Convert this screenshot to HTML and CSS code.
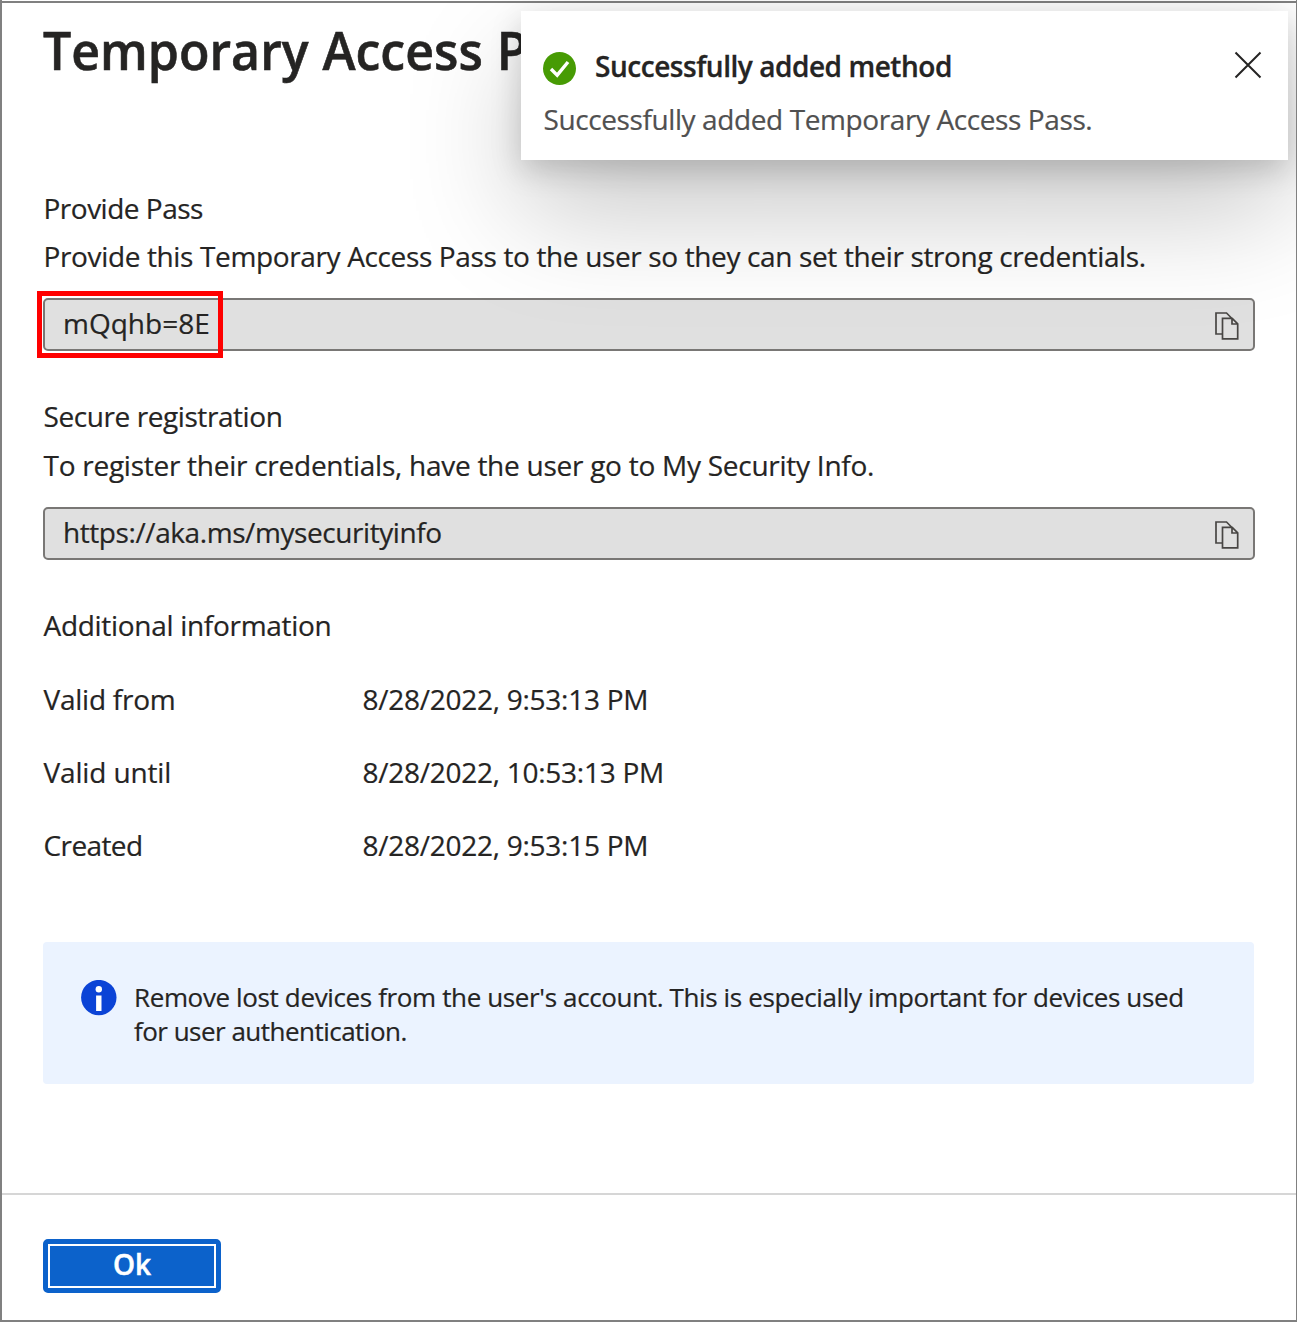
FILE: index.html
```html
<!DOCTYPE html>
<html lang="en">
<head>
<meta charset="utf-8">
<title>Temporary Access Pass</title>
<link rel="stylesheet" href="styles.css">
</head>
<body>
<div class="panel">
  <main class="content">
    <h1 class="title">Temporary Access Pass</h1>
    <section class="section">
      <h2 class="heading"><span class="t-provide">Provide Pass</span></h2>
      <p class="description"><span class="t-provide-desc">Provide this Temporary Access Pass to the user so they can set their strong credentials.</span></p>
      <div class="field">
        <span class="value t-pass">mQqhb=8E</span>
        <svg class="copy" viewBox="0 0 24 28" width="24" height="28"><path d="M7 22H1V1h10.500l5 5M7.500 6.300h9.700l5.500 5.500v15H7.500zM17 6.300v5.700h5.700"/></svg>
        <span class="marker"></span>
      </div>
    </section>
    <section class="section">
      <h2 class="heading"><span class="t-secure">Secure registration</span></h2>
      <p class="description description-secure"><span class="t-secure-desc">To register their credentials, have the user go to My Security Info.</span></p>
      <div class="field">
        <span class="value t-url">https://aka.ms/mysecurityinfo</span>
        <svg class="copy" viewBox="0 0 24 28" width="24" height="28"><path d="M7 22H1V1h10.500l5 5M7.500 6.300h9.700l5.500 5.500v15H7.500zM17 6.300v5.700h5.700"/></svg>
      </div>
    </section>
    <section class="section">
      <h2 class="heading"><span class="t-additional">Additional information</span></h2>
      <dl class="details">
        <dt class="t-from">Valid from</dt><dd class="t-date">8/28/2022, 9:53:13 PM</dd>
        <dt class="t-until">Valid until</dt><dd class="t-date">8/28/2022, 10:53:13 PM</dd>
        <dt class="t-created">Created</dt><dd class="t-date">8/28/2022, 9:53:15 PM</dd>
      </dl>
    </section>
    <div class="notice">
      <svg class="notice-icon" viewBox="0 0 36 36" width="36" height="36"><circle cx="17.800" cy="17.600" r="17.700" fill="#0b43d6"/><circle cx="17.800" cy="9.300" r="3.200" fill="#fff"/><path d="M15.100 15.500h5.400V31h-5.400z" fill="#fff"/></svg>
      <p class="notice-text"><span class="t-note1">Remove lost devices from the user's account. This is especially important for devices used</span><br><span class="t-note2">for user authentication.</span></p>
    </div>
  </main>
  <footer class="footer"><button class="ok" type="button">Ok</button></footer>
  <aside class="toast">
    <div class="toast-head">
      <svg viewBox="0 0 33 33" width="33" height="33"><circle cx="16.500" cy="16.500" r="16.500" fill="#479b04"/><path d="M8 17l6.200 6.200L25 10" fill="none" stroke="#fff" stroke-width="3.400"/></svg>
      <strong class="toast-title">Successfully added method</strong>
      <svg class="close" viewBox="0 0 28 28" width="28" height="28"><path d="M1.500 1.500l25 25M26.500 1.500l-25 25"/></svg>
    </div>
    <p class="toast-text">Successfully added Temporary Access Pass.</p>
  </aside>
</div>
</body>
</html>
```
FILE: styles.css
```css
* { box-sizing: border-box; }
body {
  margin: 0;
  background: #fff;
  color: #252423;
  font: 28px/40px "Open Sans", "Noto Sans", sans-serif;
  -webkit-text-stroke: .2px;
}
h1, h2, p, dl, dd { margin: 0; font-weight: 400; font-size: inherit; }
span, dt, dd, strong, .toast-text { white-space: nowrap; }
.panel {
  position: relative;
  display: flex;
  flex-direction: column;
  height: 1322px;
  overflow: hidden;
  border: solid #808080;
  border-width: 0 1px 2px 2px;
  padding-top: 3px;
  background: linear-gradient(#fff 1px, #808080 1px, #808080 3px, #fff 3px);
}
.content { flex: 1; padding: 12px 41px 0; }
.title {
  height: 70px;
  margin-bottom: 103px;
  font-size: 53px;
  line-height: 70px;
  font-weight: 600;
  white-space: nowrap;
  word-spacing: 1px;
  -webkit-text-stroke: .6px #252423;
  transform: scaleX(.944);
  transform-origin: 0 0;
}
.section { margin-bottom: 45px; }
.heading, .description, dt, dd { text-indent: .5px; }
.description { margin: 8px 0 22px; }
.description-secure { margin-top: 9px; }
.field {
  display: flex;
  align-items: center;
  justify-content: space-between;
  position: relative;
  height: 53px;
  width: 1212px;
  padding: 0 14px 0 18px;
  border: 2px solid #797775;
  border-radius: 5px;
  background: #e0e0e0;
}
.value { margin-top: -4px; }
.copy { margin-top: 3px; fill: none; stroke: #484644; stroke-width: 1.7; }
.marker { position: absolute; left: -8px; top: -9px; width: 186px; height: 67px; border: 5px solid #f00; }
.t-provide { letter-spacing: -.5px; }
.t-provide-desc { letter-spacing: -.36px; }
.t-secure { letter-spacing: -.42px; }
.t-secure-desc { letter-spacing: -.26px; }
.t-url { letter-spacing: -.42px; }
.t-additional { letter-spacing: -.3px; }
.t-from { letter-spacing: -.25px; }
.t-until { letter-spacing: -.15px; }
.t-created { letter-spacing: -.6px; }
.t-date { letter-spacing: -.26px; }
.t-note1 { letter-spacing: -.37px; }
.t-note2 { letter-spacing: -.52px; }
.details { display: grid; grid-template-columns: 319px 1fr; row-gap: 33px; margin-top: 34px; }
.notice {
  display: flex;
  gap: 17px;
  width: 1211px;
  height: 142px;
  margin-top: 77px;
  padding: 38px 37px 38px 38px;
  border-radius: 4px;
  background: #ebf3ff;
}
.notice-icon { flex: none; }
.notice-text { font-size: 26px; line-height: 34px; }
.footer { height: 127px; padding: 44px 41px; border-top: 2px solid #d6d6d6; }
.ok {
  display: block;
  width: 178px;
  height: 54px;
  padding: 0 0 5px;
  border: 5px solid #0c62cb;
  border-radius: 5px;
  background: #0c62cb;
  box-shadow: inset 0 0 0 2px #fff;
  color: #fff;
  font: 600 28px/40px "Open Sans", "Noto Sans", sans-serif;
  -webkit-text-stroke: .5px #fff;
}
.toast {
  position: absolute;
  left: 519px;
  top: 11px;
  width: 767px;
  height: 149px;
  padding: 36px 26px 0 22px;
  background: #fff;
  box-shadow: 0 51.2px 115.2px rgba(0, 0, 0, .22), 0 9.6px 28.8px rgba(0, 0, 0, .18);
}
.toast-head { display: flex; align-items: center; height: 42px; }
.toast-title { margin: -5px 0 0 19px; font-weight: 600; letter-spacing: -.46px; -webkit-text-stroke: .3px #252423; }
.close { margin: -6px 0 0 auto; stroke: #252423; stroke-width: 2; }
.toast-text { margin-top: 10px; color: #505050; letter-spacing: -.4px; text-indent: .5px; }
```
